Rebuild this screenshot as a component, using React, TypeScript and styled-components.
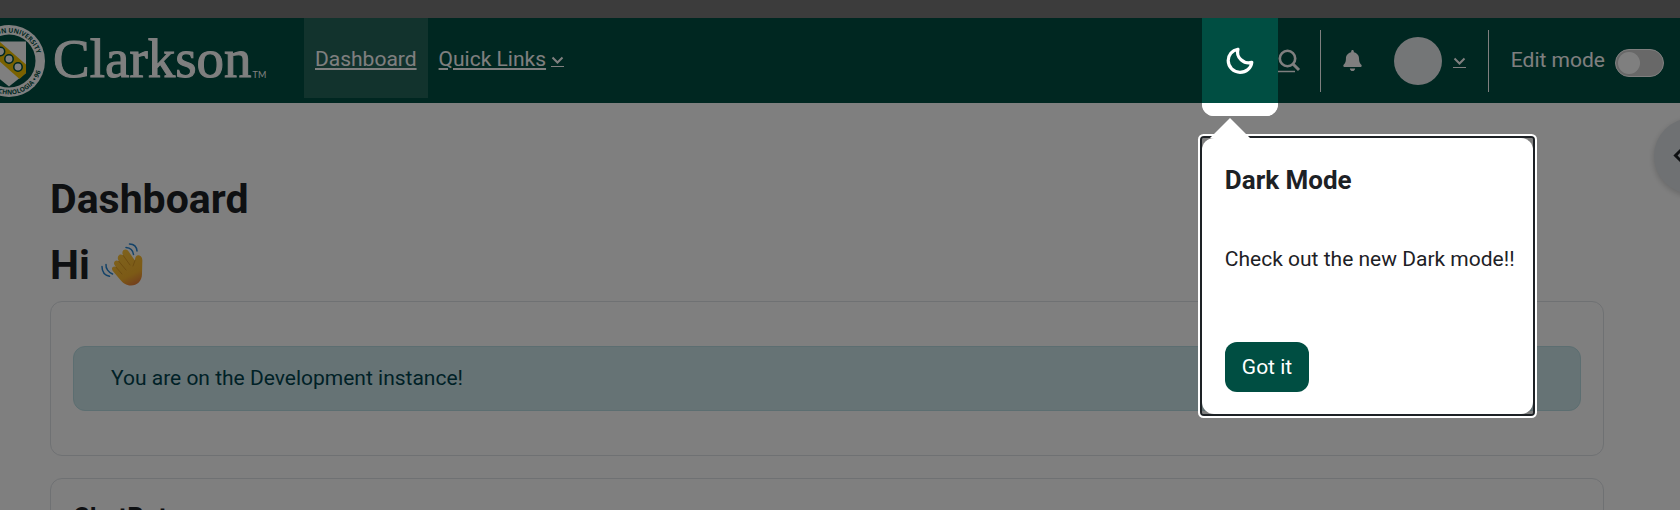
import React from "react";
import styled, { createGlobalStyle } from "styled-components";
import { FaBell } from "react-icons/fa";

const GlobalStyle = createGlobalStyle`
  *, *::before, *::after { box-sizing: border-box; }
  body {
    margin: 0;
    background: #fff;
    color: #1d2125;
    font-family: Roboto, "Liberation Sans", sans-serif;
    font-size: 21px;
    line-height: 31px;
  }
  button { font: inherit; color: inherit; border: 0; padding: 0; background: none; cursor: pointer; }
`;

const Page = styled.div`
  position: relative;
  height: 100vh;
  overflow: hidden;
`;

const TopStrip = styled.div`
  height: 18px;
  background: #787878;
`;

const Header = styled.header`
  display: flex;
  align-items: stretch;
  height: 85px;
  padding-right: 16px;
  background: #004e42;
  color: #fff;
`;

const Brand = styled.a`
  display: flex;
  align-items: center;
  width: 304px;
  color: #fff;
  text-decoration: none;
  overflow: hidden;
`;

const Seal = styled.svg`
  flex: none;
  width: 74px;
  height: 74px;
  margin-left: -28px;
`;

const BrandName = styled.span`
  margin-left: 7px;
  font-family: "Liberation Serif", serif;
  font-size: 55px;
  line-height: 64px;
  padding-bottom: 4px;
  -webkit-text-stroke: 1px #fff;
`;

const TradeMark = styled.span`
  align-self: flex-end;
  padding-bottom: 22px;
  margin-left: 1px;
  font-family: Lato, sans-serif;
  font-size: 9px;
  line-height: 12px;
`;

const Nav = styled.nav`
  display: flex;
  align-items: flex-start;
`;

const NavLink = styled.a<{ $active?: boolean }>`
  display: flex;
  align-items: center;
  gap: 5px;
  height: 80px;
  padding: 3px 11px 0;
  color: #fff;
  background: ${(p) => (p.$active ? "#24665a" : "transparent")};
  text-decoration: underline;
`;

const Caret = styled.span`
  display: flex;
  margin-top: 4px;
  padding-bottom: 1px;
  border-bottom: 1px solid #fff;
`;

const Tools = styled.div`
  display: flex;
  align-items: center;
  margin-left: auto;
`;

const TourTarget = styled.div`
  position: relative;
  align-self: stretch;
  width: 76px;
`;

const MoonButton = styled.button`
  display: flex;
  align-items: center;
  justify-content: center;
  width: 100%;
  height: 100%;
  color: #fff;
`;

/* The lit area; its shadow dims the rest of the page. */
const Spotlight = styled.div`
  position: absolute;
  z-index: 10;
  inset: 0 0 -13px;
  border-radius: 0 0 12px 12px;
  box-shadow: 0 0 0 9999px rgba(0, 0, 0, 0.5);
  pointer-events: none;

  &::after {
    content: "";
    position: absolute;
    inset: auto 0 0;
    height: 13px;
    border-radius: 0 0 12px 12px;
    background: #fff;
  }
`;

const TourStep = styled.div`
  position: absolute;
  z-index: 20;
  top: 120px;
  left: 0;
  width: max-content;
  border-radius: 2px;
  box-shadow: 0 0 0 2px #1d2125, 0 0 0 4px #fff;
  color: #1d2125;

  &::before {
    content: "";
    position: absolute;
    top: -20px;
    left: 8px;
    border: 20px solid transparent;
    border-top: 0;
    border-bottom-color: #fff;
  }
`;

const TourBody = styled.div`
  display: flex;
  flex-direction: column;
  align-items: flex-start;
  padding: 24px 18px 22px 23px;
  border-radius: 12px;
  background: #fff;
`;

const TourTitle = styled.h2`
  margin: 0 0 46px;
  font-size: 26px;
  font-weight: 700;
  line-height: 36px;
`;

const TourText = styled.p`
  margin: 0 0 67px;
`;

const PrimaryButton = styled.button`
  height: 50px;
  padding: 0 17px;
  border-radius: 12px;
  background: #004e42;
  color: #fff;
`;

const SearchButton = styled.button`
  display: flex;
  width: 23px;
  margin-right: 19px;
  color: #fff;
`;

const Divider = styled.span`
  width: 1px;
  height: 62px;
  background: #fff;
`;

const BellButton = styled.button`
  display: flex;
  margin: 0 31px 0 21px;
  color: #fff;
`;

const UserMenu = styled.button`
  display: flex;
  align-items: center;
  gap: 11px;
  margin-right: 22px;
  color: #fff;
`;

const Avatar = styled.span`
  width: 48px;
  height: 48px;
  border-radius: 50%;
  background: #e9ecef;
`;

const EditMode = styled.label`
  display: flex;
  align-items: center;
  gap: 10px;
  margin-left: 22px;
  white-space: nowrap;
`;

const Switch = styled.input`
  appearance: none;
  display: flex;
  align-items: center;
  width: 49px;
  height: 28px;
  margin: 5px 0 0;
  padding: 0 2px;
  border: 1px solid #fff;
  border-radius: 14px;
  background: #d0d0d0;

  &::before {
    content: "";
    width: 22px;
    height: 22px;
    border-radius: 50%;
    background: #fff;
  }
`;

const Main = styled.main`
  padding: 71px 76px 0 50px;
`;

const Heading = styled.h1`
  margin: 0 0 16px;
  font-size: 41px;
  font-weight: 700;
  line-height: 50px;
`;

const Greeting = styled.h2`
  display: flex;
  align-items: center;
  gap: 11px;
  margin: 0 0 11px;
  font-size: 41px;
  font-weight: 700;
  line-height: 50px;
`;

const Card = styled.section`
  margin-bottom: 22px;
  padding: 44px 22px;
  border: 1px solid #dee2e6;
  border-radius: 12px;
`;

const BlockCard = styled(Card)`
  padding: 20px 22px;
`;

const BlockTitle = styled.h3`
  margin: 0;
  font-size: 26px;
  line-height: 36px;
`;

const Alert = styled.div`
  padding: 16px 37px;
  border: 1px solid #b8dce2;
  border-radius: 12px;
  background: #cce6ea;
  color: #00434e;
`;

const DrawerToggle = styled.button`
  position: absolute;
  top: 118px;
  right: -50px;
  display: flex;
  align-items: center;
  width: 76px;
  height: 76px;
  padding-left: 16px;
  border-radius: 50%;
  background: #dee2e6;
  box-shadow: 0 2px 6px rgba(0, 0, 0, 0.2);
`;

function ChevronDown() {
  return (
    <svg width="13" height="9" viewBox="0 0 13 9" fill="none" stroke="currentColor" strokeWidth="2">
      <path d="M1.5 1.5 6.5 6.5l5-5" />
    </svg>
  );
}

function MoonIcon() {
  return (
    <svg width="28" height="28" viewBox="0 0 28 28" fill="none" stroke="currentColor" strokeWidth="3.2" strokeLinejoin="round">
      <path d="M12 2.2C5.900 3.300 2.200 8.200 2.200 13.600 2.200 20.200 7.600 25.300 14 25.300 20.200 25.300 25.200 21 25.800 15.400 18 17.600 9.500 10.500 12 2.200Z" />
    </svg>
  );
}

function SearchIcon() {
  return (
    <svg width="23" height="24" viewBox="0 0 23 24" fill="none" stroke="currentColor">
      <circle cx="9.500" cy="9.500" r="7.700" strokeWidth="2.600" />
      <path d="M15 15l6 6" strokeWidth="3" />
      <path d="M0 22.500h17" strokeWidth="1.500" />
    </svg>
  );
}

function UniversitySeal() {
  return (
    <Seal viewBox="-37 -37 74 74" aria-hidden="true">
      <defs>
        <path id="sealTop" d="M-28.500 0A28.500 28.500 0 0 1 28.500 0" />
        <path id="sealBottom" d="M-33.500 0A33.500 33.500 0 0 0 33.500 0" />
      </defs>
      <circle r="36" fill="#fff" />
      <circle r="26.500" fill="#004e42" />
      <g fill="#004e42" fontFamily="Open Sans, sans-serif" fontSize="6.500" fontWeight="700">
        <text textAnchor="end">
          <textPath href="#sealTop" startOffset="92%">CLARKSON UNIVERSITY</textPath>
        </text>
        <text textAnchor="end">
          <textPath href="#sealBottom" startOffset="90%">TECHNOLOGIA • 96</textPath>
        </text>
      </g>
      <path d="M-17-19.500H17V12L0 25.500-17 12Z" fill="#fff" />
      <path d="M-17-26 17 3.500V12L10.500 18-17-6.500Z" fill="#f5c400" />
      <g fill="#fff" stroke="#004e42" strokeWidth="1.500">
        <circle cx="-8.500" cy="-9.500" r="4.200" />
        <circle cx="0" cy="-2" r="4.200" />
        <circle cx="9" cy="6" r="4.200" />
      </g>
    </Seal>
  );
}

function WavingHand() {
  return (
    <svg width="42" height="44" viewBox="0 0 42 44" fill="none" role="img" aria-label="waving hand">
      <defs>
        <linearGradient id="skin" x1="14" y1="6" x2="32" y2="42" gradientUnits="userSpaceOnUse">
          <stop offset="0" stopColor="#ffc83d" />
          <stop offset="0.75" stopColor="#f9b52c" />
          <stop offset="1" stopColor="#e8833a" />
        </linearGradient>
      </defs>
      <path
        d="M34 17.500C33.700 13.500 36 11.500 38.500 12.500 41 13.500 41.600 16 41.300 19L41 31C41 38 36 42.500 30 42.500 25 42.500 22 40 19 36.500L11.800 28C9.500 25 12.500 22.300 15 24.200L13.700 22.300C11.500 19 15 15.800 17.800 18.300L17.500 17.500C15 12.800 19.500 10 22.300 12.600L21.500 11C20.500 6.500 25 5 27.300 8L32.500 15.500Z"
        fill="url(#skin)"
      />
      <path d="M15 24.200 21 31M17.800 18.300 25 27M22.300 12.600 29 22M34 17.500 32 23" stroke="#dc9a22" strokeWidth="1" strokeLinecap="round" />
      <g stroke="#2785d0" strokeWidth="1.500" strokeLinecap="round">
        <path d="M25 4.500C29 4.800 32 7.500 32.500 11.500" />
        <path d="M28.500 1C33 1.200 35.700 4 36 8" />
        <path d="M5 21.500C4.600 25.500 7.500 29.500 11.500 31" />
        <path d="M1 23.500C1 28.500 4 32.300 8.500 33.300" />
      </g>
    </svg>
  );
}

export default function App() {
  return (
    <>
      <GlobalStyle />
      <Page>
        <TopStrip />
        <Header>
          <Brand href="#">
            <UniversitySeal />
            <BrandName>Clarkson</BrandName>
            <TradeMark>TM</TradeMark>
          </Brand>
          <Nav>
            <NavLink href="#" $active>Dashboard</NavLink>
            <NavLink href="#">
              Quick Links
              <Caret><ChevronDown /></Caret>
            </NavLink>
          </Nav>
          <Tools>
            <TourTarget>
              <MoonButton aria-label="Toggle dark mode"><MoonIcon /></MoonButton>
              <Spotlight />
              <TourStep role="dialog" aria-labelledby="tour-title">
                <TourBody>
                  <TourTitle id="tour-title">Dark Mode</TourTitle>
                  <TourText>Check out the new Dark mode!!</TourText>
                  <PrimaryButton>Got it</PrimaryButton>
                </TourBody>
              </TourStep>
            </TourTarget>
            <SearchButton aria-label="Search"><SearchIcon /></SearchButton>
            <Divider />
            <BellButton aria-label="Notifications"><FaBell size={21} /></BellButton>
            <UserMenu aria-label="User menu">
              <Avatar />
              <Caret><ChevronDown /></Caret>
            </UserMenu>
            <Divider />
            <EditMode>
              Edit mode
              <Switch type="checkbox" />
            </EditMode>
          </Tools>
        </Header>
        <Main>
          <Heading>Dashboard</Heading>
          <Greeting>Hi <WavingHand /></Greeting>
          <Card>
            <Alert>You are on the Development instance!</Alert>
          </Card>
          <BlockCard>
            <BlockTitle>ChatBot</BlockTitle>
          </BlockCard>
        </Main>
        <DrawerToggle aria-label="Open block drawer">
          <svg width="16" height="20" viewBox="0 0 16 20" fill="none" stroke="currentColor" strokeWidth="3">
            <path d="M13 2 5.500 9.500 13 17" />
          </svg>
        </DrawerToggle>
      </Page>
    </>
  );
}
